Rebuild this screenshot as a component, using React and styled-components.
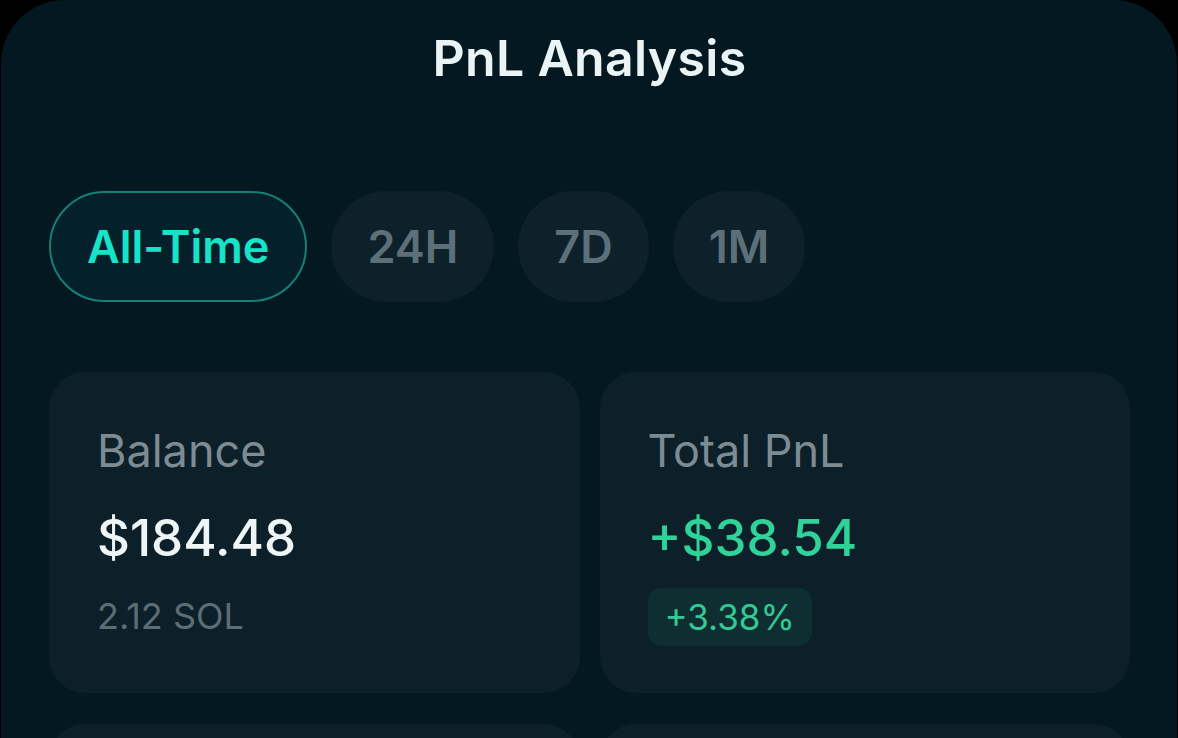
import React from "react";
import styled, { createGlobalStyle } from "styled-components";

const GlobalStyle = createGlobalStyle`
	html, body {
		margin: 0;
		padding: 0;
		background: #000;
		font-family: "Inter", "Noto Sans", sans-serif;
	}
	#root {
		width: 1178px;
		height: 738px;
		overflow: hidden;
	}
`;

const tabs = ["All-Time", "24H", "7D", "1M"];

function StatCard({ label, value, positive, sub, badge }) {
	return (
		<Card>
			<CardLabel>{label}</CardLabel>
			<CardValue positive={positive}>{value}</CardValue>
			{sub && <CardSub>{sub}</CardSub>}
			{badge && <Badge>{badge}</Badge>}
		</Card>
	);
}

export default function App() {
	return (
		<>
			<GlobalStyle />
			<Panel>
				<Title>PnL Analysis</Title>

				<Tabs>
					{tabs.map((t, i) => (
						<Tab key={t} active={i === 0}>
							{t}
						</Tab>
					))}
				</Tabs>

				<Grid>
					<StatCard label="Balance" value="$184.48" sub="2.12 SOL" />
					<StatCard label="Total PnL" value="+$38.54" positive badge="+3.38%" />
					<Card />
					<Card />
				</Grid>
			</Panel>
		</>
	);
}

const Panel = styled.div`
	box-sizing: border-box;
	width: 1176px;
	height: 738px;
	margin-left: 1px;
	background: #031821;
	border-radius: 64px 64px 0 0;
	padding: 26px 47px 0 48px;
	display: flex;
	flex-direction: column;
	overflow: hidden;
`;

const Title = styled.h1`
	margin: 0;
	text-align: center;
	color: #eaf4f5;
	font-size: 50px;
	font-weight: 600;
	line-height: 64px;
	letter-spacing: 0.3px;
`;

const Tabs = styled.div`
	display: flex;
	gap: 24px;
	margin-top: 101px;
`;

const Tab = styled.div`
	box-sizing: border-box;
	height: 111px;
	padding: 0 ${(p) => (p.active ? "36px" : "34px")};
	display: flex;
	align-items: center;
	border-radius: 56px;
	font-size: 45px;
	font-weight: 600;
	color: ${(p) => (p.active ? "#17e3c9" : "#5d7079")};
	background: ${(p) => (p.active ? "#04202a" : "#0e212a")};
	border: 2px solid ${(p) => (p.active ? "#167f76" : "transparent")};
`;

const Grid = styled.div`
	display: grid;
	grid-template-columns: 1fr 1fr;
	column-gap: 20px;
	row-gap: 31px;
	margin-top: 70px;
`;

const Card = styled.div`
	box-sizing: border-box;
	height: 321px;
	background: #0d1f28;
	border-radius: 36px;
	padding: 52px 48px 0;
	display: flex;
	flex-direction: column;
	align-items: flex-start;
`;

const CardLabel = styled.div`
	color: #7d8c94;
	font-size: 45px;
	line-height: 54px;
`;

const CardValue = styled.div`
	margin-top: 30px;
	color: ${(p) => (p.positive ? "#2fd39a" : "#eef5f6")};
	font-size: 51px;
	font-weight: 500;
	line-height: 60px;
`;

const CardSub = styled.div`
	margin-top: 26px;
	color: #5c6d76;
	font-size: 36px;
	line-height: 44px;
`;

const Badge = styled.div`
	margin-top: 20px;
	padding: 0 17px;
	height: 58px;
	display: flex;
	align-items: center;
	border-radius: 14px;
	background: #0f2e31;
	color: #33c994;
	font-size: 35px;
`;
